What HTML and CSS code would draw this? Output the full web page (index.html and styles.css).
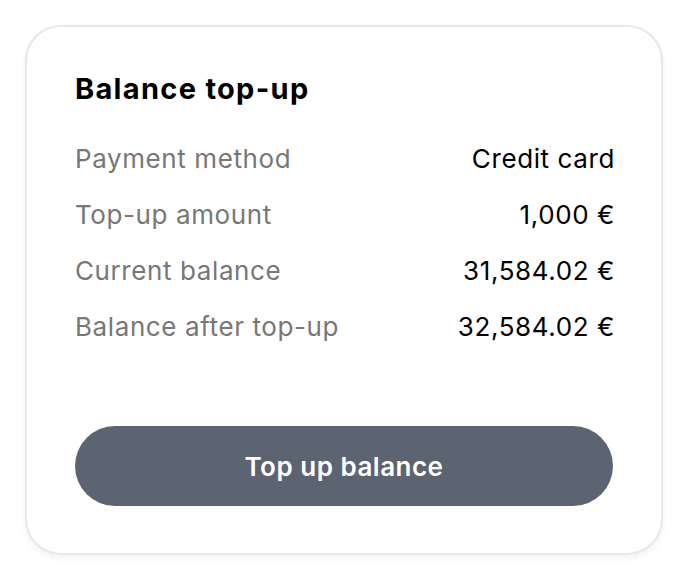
FILE: index.html
```html
<!DOCTYPE html>
<html lang="en">
<head>
  <meta charset="UTF-8" />
  <meta name="viewport" content="width=device-width, initial-scale=1.0"/>
  <title>Balance top-up</title>
  <link rel="stylesheet" href="styles.css">
</head>
<body>
  <div class="card">
    <h2>Balance top-up</h2>

    <div class="rows">
      <div class="row">
        <span class="label">Payment method</span>
        <span class="value">Credit card</span>
      </div>
      <div class="row">
        <span class="label">Top-up amount</span>
        <span class="value">1,000 €</span>
      </div>
      <div class="row">
        <span class="label">Current balance</span>
        <span class="value">31,584.02 €</span>
      </div>
      <div class="row">
        <span class="label">Balance after top-up</span>
        <span class="value">32,584.02 €</span>
      </div>
    </div>

    <button class="btn">Top up balance</button>
  </div>
</body>
</html>
```

FILE: styles.css
```css
body {
  font-family: Inter, "Liberation Sans", sans-serif;
  background: #ffffff;
  color: #000000;
  margin: 0;
  padding: 25px;
}
.card {
  box-sizing: border-box;
  width: 638px;
  height: 530px;
  padding: 43px 48px 0 48px;
  border: 2px solid #e8e8e8;
  border-radius: 36px;
  box-shadow: 0 3px 6px rgba(0, 0, 0, 0.06);
}
h2 {
  margin: 0;
  font-size: 29px;
  font-weight: 700;
  line-height: 38px;
  letter-spacing: 1.3px;
}
.rows {
  margin-top: 23px;
}
.row {
  display: flex;
  justify-content: space-between;
  font-size: 26px;
  line-height: 56px;
  letter-spacing: 0.6px;
}
.label {
  color: #777777;
}
.value {
  color: #000000;
  margin-right: -2px;
}
.btn {
  display: block;
  width: 100%;
  height: 80px;
  margin-top: 71px;
  border: none;
  border-radius: 40px;
  background: #5c6472;
  color: #ffffff;
  font-family: inherit;
  font-size: 26px;
  font-weight: 600;
  letter-spacing: 0.5px;
  cursor: pointer;
}
```
